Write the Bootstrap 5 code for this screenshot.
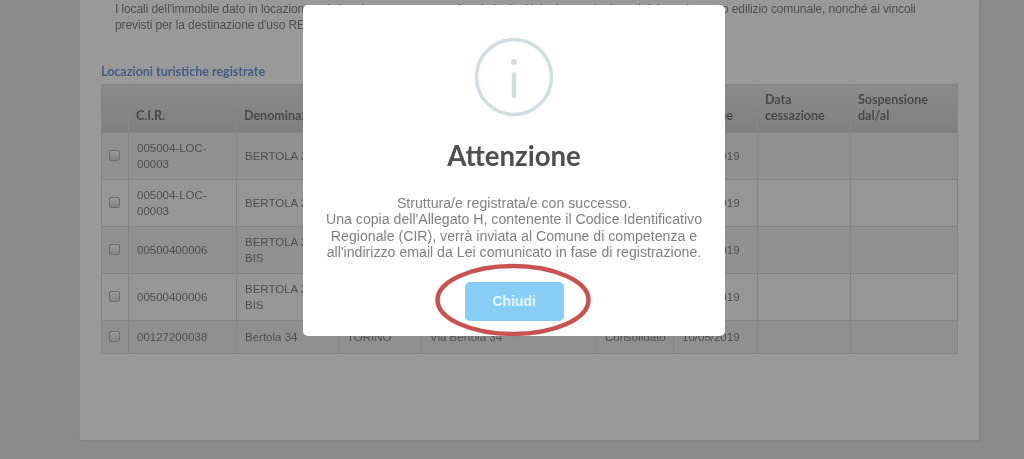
<!DOCTYPE html>
<html lang="it">
<head>
<meta charset="utf-8">
<title>Locazioni turistiche registrate</title>
<link href="https://cdn.jsdelivr.net/npm/bootstrap@5.3.0/dist/css/bootstrap.min.css" rel="stylesheet">
<style>
html,body{height:459px;overflow:hidden}
body{background:#8a8a8a;font-family:"Liberation Sans",Arial,sans-serif;font-size:12px;color:#4b4b4b}
.page-panel{width:899px;height:440px;margin-left:80px;background:#999;box-shadow:1px 1px 2px #7f7f7f;padding:1px 22px 0 21px;filter:blur(.4px)}
.intro-text{margin:0;padding:0 0 0 14px;line-height:16px;height:63px;white-space:nowrap;color:#505050;letter-spacing:-.1px}
.section-title{font-family:Lato,sans-serif;font-weight:700;font-size:12.5px;color:#3f5f84;line-height:16px;margin:0;height:20px}
.reg-table{table-layout:fixed;width:856px;border-collapse:collapse;margin:0;color:#4f4f4f;line-height:16px;font-size:11.5px}
.reg-table th,.reg-table td{border:1px solid #858585;padding:0 8px 1px;vertical-align:middle;font-weight:400}
.reg-table thead th{background:linear-gradient(#8b8b8b,#7f7f7f);border-color:#878787;border-bottom:0;font-family:Lato,sans-serif;font-size:12.5px;font-weight:700;color:#494949;vertical-align:bottom;height:48px;padding:0 7px 8px}
.reg-table tbody tr{height:47px}
.reg-table tbody tr.short-row{height:33px}
.reg-table tbody tr:nth-child(odd) td{background:#909090}
.reg-table tbody tr:nth-child(even) td{background:#969696}
.reg-table tbody tr.short-row td{background:#8f8f8f}
.c1{width:27px}.c2{width:108px}.c3{width:102px}.c4{width:83px}.c5{width:175px}.c6{width:77px}.c7{width:84px}.c8{width:93px}.c9{width:107px}
.box-mark{display:block;width:11px;height:11px;border:1px solid #6f6f6f;border-radius:2px;background:linear-gradient(#9a9a9a,#838383);margin:0 auto 0 -1px}
.dialog-wrap{max-width:422px;margin:5px 0 0 303px}
.dialog-box{height:331px;border:0;border-radius:5px;background:#fff;align-items:center;padding-top:33px;text-align:center}
.info-icon{width:80px;height:80px;display:block}
.dialog-title{font-family:Lato,sans-serif;font-weight:700;font-size:27.6px;line-height:32px;color:#4f4f4f;margin:22px 0 0;filter:blur(.3px)}
.dialog-text{font-size:14.15px;line-height:16.3px;color:#808080;margin:23px 0 0;white-space:nowrap;filter:blur(.3px)}
.close-btn{width:99px;height:39px;margin-top:22px;background:#87cef6;border:0;border-radius:5px;color:#e6f4fc;font-size:14px;font-weight:700;padding:0}
.red-ring{position:absolute;left:131px;top:257px;width:158px;height:76px;pointer-events:none}
</style>
</head>
<body>
<div class="page-panel">
  <p class="intro-text">I locali dell'immobile dato in locazione turistica devono essere conformi ai criteri igienico-sanitari posti dal regolamento edilizio comunale, nonché ai vincoli<br>previsti per la destinazione d'uso RESIDENZIALE.</p>
  <h6 class="section-title">Locazioni turistiche registrate</h6>
  <table class="table reg-table">
    <colgroup><col class="c1"><col class="c2"><col class="c3"><col class="c4"><col class="c5"><col class="c6"><col class="c7"><col class="c8"><col class="c9"></colgroup>
    <thead>
      <tr><th></th><th>C.I.R.</th><th>Denominazione</th><th></th><th></th><th></th><th>Adesione</th><th>Data cessazione</th><th>Sospensione dal/al</th></tr>
    </thead>
    <tbody>
      <tr><td><span class="box-mark"></span></td><td>005004-LOC-00003</td><td>BERTOLA 34</td><td></td><td></td><td></td><td>10/05/2019</td><td></td><td></td></tr>
      <tr><td><span class="box-mark"></span></td><td>005004-LOC-00003</td><td>BERTOLA 34</td><td></td><td></td><td></td><td>10/05/2019</td><td></td><td></td></tr>
      <tr><td><span class="box-mark"></span></td><td>00500400006</td><td>BERTOLA 34 BIS</td><td></td><td></td><td></td><td>10/05/2019</td><td></td><td></td></tr>
      <tr><td><span class="box-mark"></span></td><td>00500400006</td><td>BERTOLA 34 BIS</td><td></td><td></td><td></td><td>10/05/2019</td><td></td><td></td></tr>
      <tr class="short-row"><td><span class="box-mark"></span></td><td>00127200038</td><td>Bertola 34</td><td>TORINO</td><td>Via Bertola 34</td><td>Consolidato</td><td>10/05/2019</td><td></td><td></td></tr>
    </tbody>
  </table>
</div>

<div class="modal d-block" tabindex="-1">
  <div class="modal-dialog dialog-wrap">
    <div class="modal-content dialog-box">
      <svg class="info-icon" viewBox="0 0 80 80" aria-hidden="true">
        <circle cx="40" cy="39" r="37.5" fill="none" stroke="#cfdee3" stroke-width="3.4"/>
        <circle cx="40" cy="24" r="3" fill="#cfdee3"/>
        <rect x="37.8" y="34" width="4.4" height="26" rx="2.2" fill="#cfdee3"/>
      </svg>
      <h2 class="dialog-title">Attenzione</h2>
      <p class="dialog-text">Struttura/e registrata/e con successo.<br>Una copia dell'Allegato H, contenente il Codice Identificativo<br>Regionale (CIR), verrà inviata al Comune di competenza e<br>all'indirizzo email da Lei comunicato in fase di registrazione.</p>
      <button type="button" class="btn close-btn">Chiudi</button>
      <svg class="red-ring" viewBox="0 0 158 76" aria-hidden="true">
        <ellipse cx="79" cy="38" rx="75.5" ry="34" fill="none" stroke="#c8524f" stroke-width="4.5"/>
      </svg>
    </div>
  </div>
</div>
<script src="https://cdn.jsdelivr.net/npm/bootstrap@5.3.0/dist/js/bootstrap.bundle.min.js"></script>
</body>
</html>
